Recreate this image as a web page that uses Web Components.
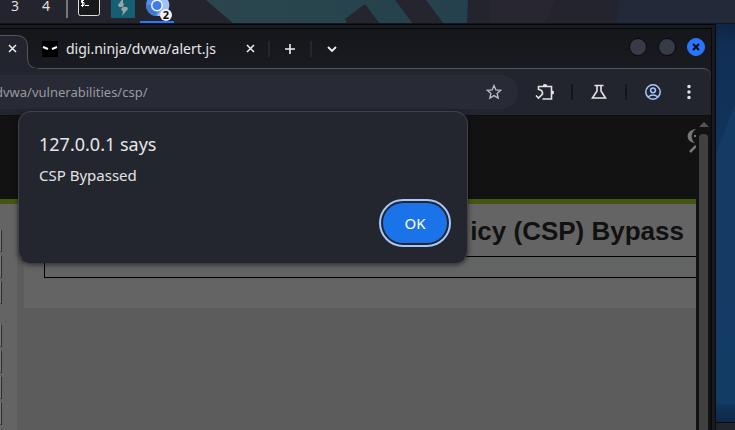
<!DOCTYPE html>
<html lang="en">
<head>
<meta charset="utf-8">
<title>Desktop</title>
<style>
html,body{margin:0;height:100%}
body{overflow:hidden;background:#123a63;font-family:"Noto Sans","Open Sans",sans-serif;font-size:14px;color:#e3e3e3}
</style>
</head>
<body>
<desk-top>
  <task-panel slot="panel"></task-panel>
  <browser-window>
    <tab-strip slot="tabs"></tab-strip>
    <tool-bar slot="toolbar"></tool-bar>
    <web-page slot="page"></web-page>
    <alert-dialog slot="dialog">
      <span slot="title">127.0.0.1 says</span>
      <span slot="message">CSP Bypassed</span>
    </alert-dialog>
  </browser-window>
</desk-top>
<script>
const define = (name, html) => customElements.define(name, class extends HTMLElement {
  constructor() {
    super();
    const t = document.createElement('template');
    t.innerHTML = html;
    this.attachShadow({ mode: 'open' }).append(t.content.cloneNode(true));
  }
});

define('desk-top', `
<style>
:host{display:flex;flex-direction:column;height:100vh}
.rest{flex:1;display:flex;min-height:0}
::slotted(browser-window){flex:1}
.wall{width:19px;display:flex;flex-direction:column}
.wall svg{flex:1;width:100%;min-height:0}
.dock{height:8px;box-sizing:border-box;border-top:1px solid #0b0c10;background:#22242e}
</style>
<slot name="panel"></slot>
<div class="rest"><slot></slot>
<div class="wall"><svg viewBox="0 0 19 398" preserveAspectRatio="none" aria-hidden="true">
<defs><linearGradient id="w" x1="0" x2="0" y1="0" y2="1"><stop offset="0" stop-color="#0e2645"/><stop offset=".06" stop-color="#112f55"/><stop offset=".3" stop-color="#12335b"/><stop offset=".95" stop-color="#12365f"/><stop offset="1" stop-color="#0d2746"/></linearGradient></defs>
<path fill="url(#w)" d="M0 0h19v398H0z"/><path fill="#143f68" opacity=".7" d="M19 80 0 130v250h19z"/></svg><div class="dock"></div></div>
</div>`);

define('task-panel', `
<style>
:host{display:flex;height:24px;background:#23242e;position:relative;overflow:hidden}
.art{position:absolute;inset:0;width:100%;height:100%}
nav{position:relative;display:flex;align-items:flex-start;height:24px}
button{all:unset;display:flex;align-items:flex-start;justify-content:center;height:24px;box-sizing:border-box}
.ws{width:32px;line-height:12px;color:#e0ded9;font-size:14px}
.ws:first-child{width:30px}
.sep{width:2px;height:18px;background:#77777b;margin:0 9px 0 4px}
.run{border-bottom:2px solid #2777ff;margin-left:5px;height:23px;width:34px}
svg{display:block}
</style>
<svg class="art" viewBox="0 0 735 24" preserveAspectRatio="none" aria-hidden="true">
<defs><linearGradient id="g"><stop offset="0" stop-color="#2b464d"/><stop offset="1" stop-color="#24414d"/></linearGradient></defs>
<path fill="url(#g)" d="M206 0h262l-1 24H234z"/><path fill="#24252f" d="M345 19 365 4 380 24H347zM395 0h31l18 24h-31z"/>
<path fill="#28262f" d="M490 0h65l-10 24h-55z"/><path fill="#222a39" d="M620 0h115v24H616z"/><path fill="#15161b" d="M0 23h735v1H0z"/></svg>
<nav>
<button class="ws">3</button><button class="ws">4</button><span class="sep"></span>
<button aria-label="Terminal"><svg width="24" height="18"><path d="M1.500-3V13.500a2 2 0 0 0 2 2h17a2 2 0 0 0 2-2V-3z" fill="#171819" stroke="#ddd" /><path d="M7 .5H4.500v2H7v3H4M5.500-1v8M8 5.500h4" stroke="#fff" fill="none"/></svg></button>
<button aria-label="Burp Suite" style="margin-left:8px"><svg width="26" height="18"><path fill="#145f71" d="M2 0h24v18H2z"/><path fill="#9ba3a7" d="M14-2 9 5l1 2h4l-2 2 2 3-1 4 6-7-1-2h-4l1-3-1-1z"/></svg></button>
<button class="run" aria-label="Chromium, 2 windows"><svg width="34" height="21"><circle cx="17" cy="5" r="11" fill="#558ceb"/><path d="M6 5a11 11 0 0 0 9 11l3-6-6-5z" fill="#3f78cf"/><path d="M17 0h11a11 11 0 0 1-11 16l5-8z" fill="#a2c1f6"/><circle cx="17" cy="5.500" r="6" fill="#eef4ff"/><circle cx="17" cy="5.500" r="4.500" fill="#427be1"/><circle cx="26" cy="15" r="6" fill="#f2f2f2"/><text x="26" y="19" text-anchor="middle" font-size="11" font-weight="700" fill="#111">2</text></svg></button>
</nav>`);

define('browser-window', `
<style>
:host{display:flex;flex-direction:column;position:relative;min-width:0;box-sizing:border-box;background:#181a21;border-top:1px solid #050608;border-right:1px solid #07090d;padding:3px 3px 0 0}
.in{flex:1;display:flex;flex-direction:column;min-height:0;border-top:1px solid #07080a;border-right:1px solid #07080a}
::slotted(web-page){flex:1}
</style>
<div class="in"><slot name="tabs"></slot><slot name="toolbar"></slot><slot name="page"></slot></div><slot name="dialog"></slot>`);

define('tab-strip', `
<style>
:host{display:flex;align-items:center;height:39px;position:relative;background:linear-gradient(#15161a,#1a1b22);color:#e6e6e6}
button{all:unset;display:grid;place-items:center}
svg{display:block}
.active{align-self:stretch;width:42px;position:relative}
.active>svg{position:absolute;inset:0}
.x{position:relative;width:24px;height:39px}
.tab{display:flex;align-items:center;height:39px}
.tab b{font-weight:400;margin-left:8px;width:168px;font-size:14px;line-height:20px;white-space:nowrap}
i{width:2px;height:16px;background:#252631}
.wm{margin-left:auto;display:flex;gap:11px;padding-right:6px}
.wm button{width:18px;height:18px;box-sizing:border-box;border-radius:50%;background:#373b47;border:1px solid #08090b;margin-bottom:3px}
.wm .close{background:#2777ff;border-color:#2777ff}
</style>
<div class="active"><svg width="42" height="40"><path d="M0 6h16q11 0 11 11v12q0 10 10 10h5v1H0z" fill="#23252e"/><path d="M0 6.500h16q11.500 0 11.500 11V29q0 10.500 10.500 10.500h4" fill="none" stroke="#55565b"/></svg>
<button class="x" aria-label="Close tab"><svg width="9" height="9"><path d="m1 1 7 7m0-7-7 7" stroke="#eee" stroke-width="1.500"/></svg></button></div>
<div class="tab"><svg width="16" height="16"><path d="M0 0h16v16H0z"/><path d="m1 6 5 2m4 0 5-2" stroke="#fff" stroke-width="2"/></svg><b>digi.ninja/dvwa/alert.js</b></div>
<button style="width:32px;height:39px" aria-label="Close tab digi.ninja"><svg width="9" height="9"><path d="m1 1 7 7m0-7-7 7" stroke="#eee" stroke-width="1.500"/></svg></button>
<i style="margin-left:2px"></i>
<button style="width:40px;height:39px" aria-label="New tab"><svg width="12" height="12"><path d="M6 1v10M1 6h10" stroke="#eee" stroke-width="1.600"/></svg></button><i></i>
<button style="width:40px;height:39px" aria-label="Search tabs"><svg width="10" height="8"><path d="m1 2 4 4 4-4" fill="none" stroke="#eee" stroke-width="1.800"/></svg></button>
<div class="wm"><button aria-label="Minimize"></button><button aria-label="Maximize"></button><button class="close" aria-label="Close window"><svg width="8" height="8"><path d="m1 1 6 6m0-6-6 6" stroke="#080a10" stroke-width="2"/></svg></button></div>`);

define('tool-bar', `
<style>
:host{display:flex;align-items:center;height:48px;box-sizing:border-box;background:#23252e;border-top:1px solid #55565b;border-bottom:1px solid #0d0e10;border-top-right-radius:8px;position:relative;padding-right:12px}
.edge{position:absolute;left:0;top:-1px;width:38px;height:1px;background:#23252e}
.omni{flex:1;display:flex;align-items:center;height:34px;border-radius:0 17px 17px 0;background:#282a35;padding-right:14px}
input{all:unset;flex:1;min-width:0;font-size:13px;line-height:20px;color:#989aa0;text-indent:-5px}
button{all:unset;display:grid;place-items:center;width:20px;height:28px}
i{width:2px;height:16px;background:#15161c}
svg{display:block;fill:none;stroke:#e4e4e4;stroke-width:1.600}
.tools{display:flex;align-items:center;padding-left:17px}
</style>
<span class="edge"></span>
<div class="omni"><input aria-label="Address" value="dvwa/vulnerabilities/csp/"><button aria-label="Bookmark"><svg width="16" height="16" style="stroke:#bdbec0;stroke-width:1.300"><path d="m8 1.500 1.900 4.400 4.800.4-3.600 3.100 1.100 4.700L8 11.600l-4.200 2.500 1.100-4.700L1.300 6.300l4.800-.4z"/></svg></button></div>
<div class="tools">
<button aria-label="Extensions"><svg width="20" height="18"><path d="M3.500 7V3.500h13v12.500h-9M3.500 6.500c4 0 5 4 3 5.500M1 12.500l2.500 2.500 4.500-4.500"/><path d="M8 3a2 2 0 0 1 4 0zM17 7.500a2 2 0 0 1 0 4z" fill="#e4e4e4" stroke="none"/><path d="M8 2.500h4M17.500 8v3"/></svg></button>
<i style="margin:0 16px"></i>
<button aria-label="Chrome Labs"><svg width="16" height="16"><path d="M3.500 1.500h9M6 1.500v5.500l-4.500 7h13L10 7V1.500"/></svg></button>
<i style="margin:0 16px"></i>
<button aria-label="Profile"><svg width="18" height="18" style="stroke:#a8c7fa;stroke-width:1.500"><circle cx="9" cy="9" r="7.200"/><circle cx="9" cy="7.300" r="2.400"/><path d="M4 14q5-4 10 0"/></svg></button>
<button aria-label="Menu" style="margin-left:16px"><svg width="4" height="16" style="fill:#e4e4e4;stroke:none"><circle cx="2" cy="2.500" r="1.700"/><circle cx="2" cy="8" r="1.700"/><circle cx="2" cy="13.500" r="1.700"/></svg></button>
</div>`);

define('web-page', `
<style>
:host{display:flex;min-height:0;overflow:hidden;background:#121212;font-family:"Liberation Sans",Arial,sans-serif}
.view{flex:1;min-width:0;display:flex;flex-direction:column;overflow:hidden}
header{flex:none;height:83px;border-bottom:5px solid #445711;display:flex;justify-content:flex-end}
header svg{margin-top:11px}
.cols{flex:1;display:flex;gap:7px;background:#5c5c5c;min-height:0}
aside{flex:none;width:17px;background:#646464;padding-top:25px;box-sizing:border-box;display:flex;flex-direction:column;gap:3px}
aside span{flex:none;box-sizing:border-box;width:2px;height:23px;border:1px solid #2e2e30;border-top-color:#777;border-left-color:#777}
aside span:nth-child(4){margin-top:17px}
main{flex:1;min-width:0;align-self:flex-start;background:#646464;height:104px;padding-left:20px;box-sizing:border-box;overflow:hidden}
h1{margin:0;padding:12px 12px 10px 0;font-size:26px;line-height:30px;font-weight:700;color:#111;white-space:nowrap;text-align:right}
.box{height:20px;border:1px solid #000;border-right:0;background:#626563}
.bar{width:15px;display:flex;flex-direction:column;align-items:center;background:#121212}
.bar svg{margin:6px 0 7px 1px}
.thumb{flex:1;width:9px;background:#414141;border-radius:4px 4px 0 0}
</style>
<div class="view"><header><svg width="9" height="28" fill="none" stroke="#777" aria-hidden="true"><path d="M9 2C-2 3-2 15 8 16 3 12 4 5 9 2z" fill="#777" stroke="none"/><path d="M3 25 9 19" stroke-width="2.500"/><path d="M7 9h2" stroke-width="2"/></svg></header>
<div class="cols"><aside><span></span><span></span><span></span><span></span><span></span><span></span><span></span><span></span></aside>
<main><h1>icy (CSP) Bypass</h1><div class="box"></div></main></div></div>
<div class="bar"><svg width="10" height="5"><path d="M0 5 5 0l5 5z" fill="#555"/></svg><div class="thumb"></div></div>`);

define('alert-dialog', `
<style>
:host{position:absolute;left:18px;top:86px;width:450px}
dialog{all:unset;display:flex;flex-direction:column;box-sizing:border-box;width:100%;border:1px solid #414247;border-bottom-color:#24262e;border-radius:13px;background:#23262f;padding:19px 16px 16px 20px;box-shadow:0 2px 5px #0008}
h2{margin:0;font-size:18px;line-height:26px;font-weight:400;color:#e6e6e6}
p{margin:8px 0 15px;font-size:15px;line-height:20px;color:#e3e3e3}
button{all:unset;align-self:flex-end;box-sizing:border-box;width:64px;height:40px;margin:3px 4px;border-radius:20px;background:#1a73e8;color:#fff;text-align:center;font-size:15px;outline:2px solid #a8c7fa;outline-offset:2px}
</style>
<dialog open aria-labelledby="t"><h2 id="t"><slot name="title"></slot></h2><p><slot name="message"></slot></p><button autofocus>OK</button></dialog>`);
</script>
</body>
</html>
